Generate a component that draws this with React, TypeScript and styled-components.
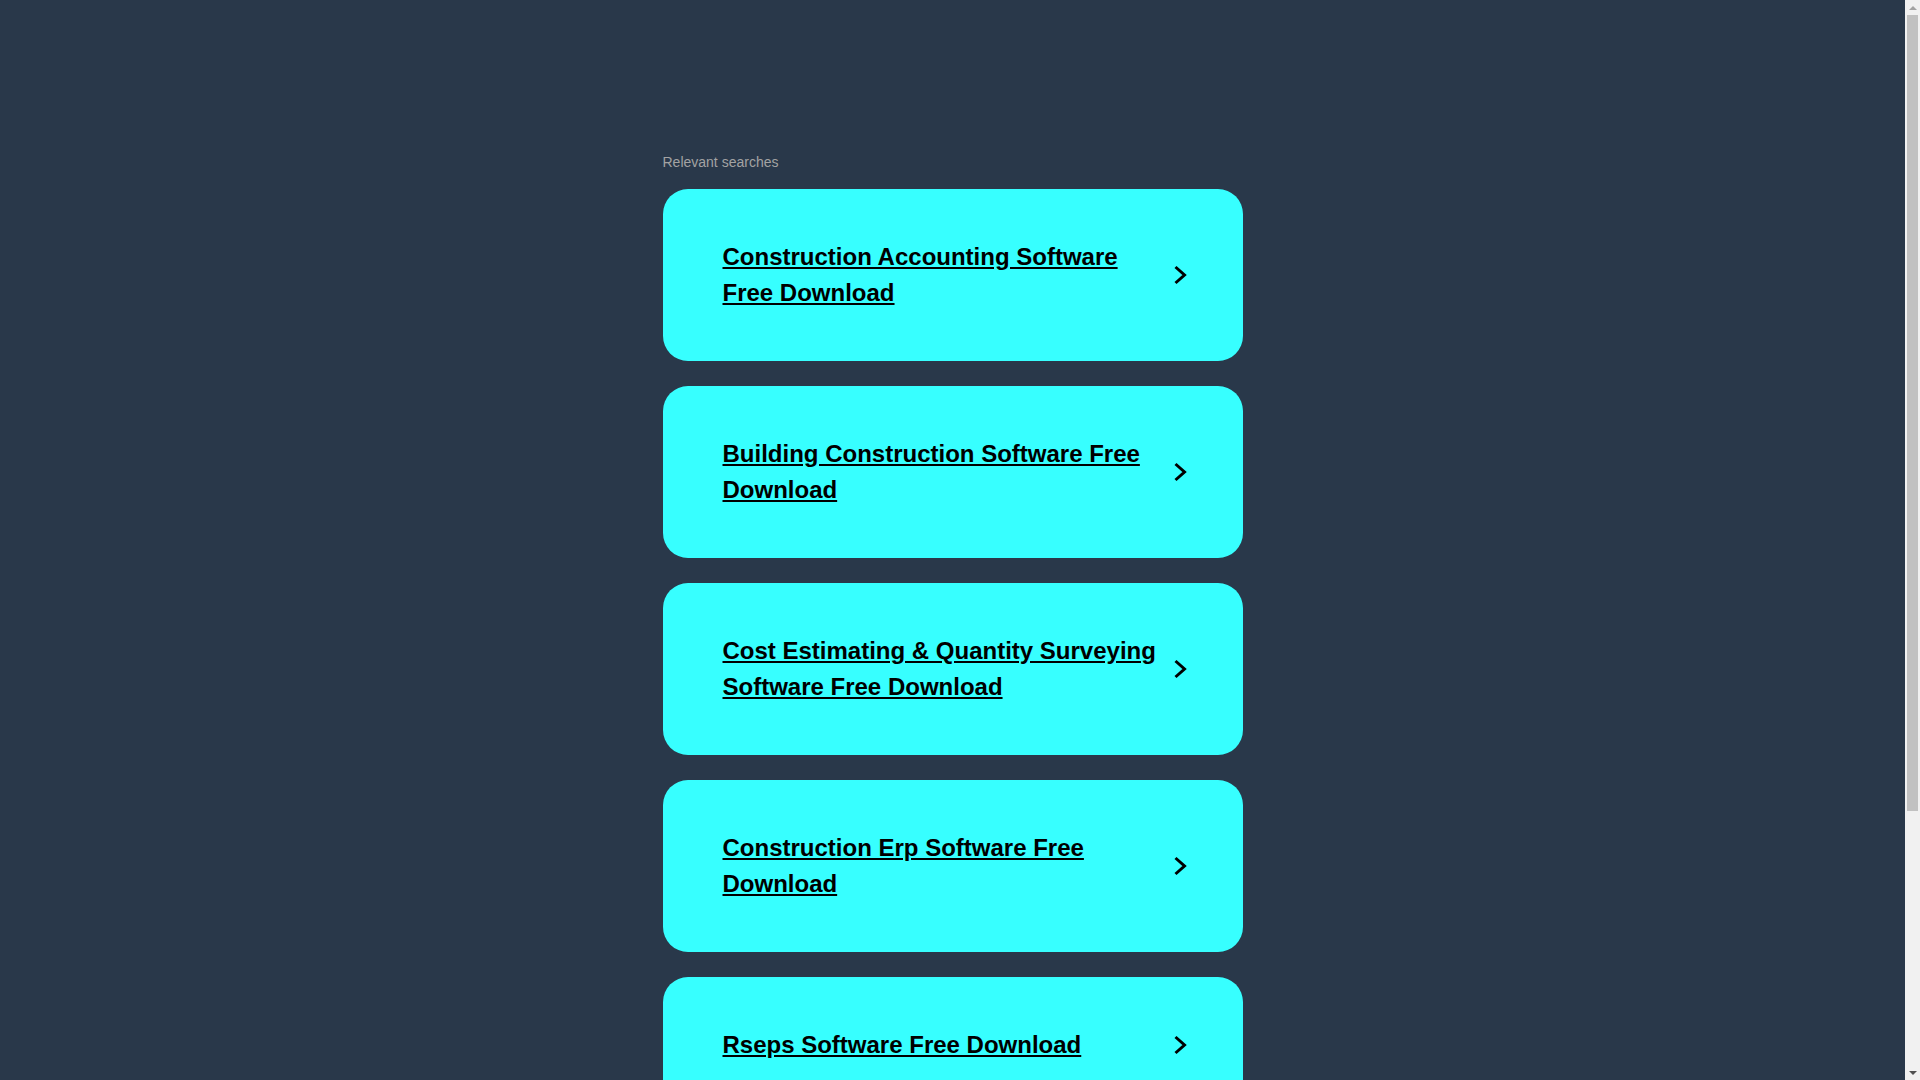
import styled, { createGlobalStyle } from 'styled-components'

const Global = createGlobalStyle`
  html, body {
    margin: 0;
    padding: 0;
    background: #29384a;
  }
  body {
    font-family: "Liberation Sans", Arial, sans-serif;
    padding-right: 15px;
  }
`

const Page = styled.main`
  width: 580px;
  margin: 0 auto;
  padding: 154px 0 317px;
`

const Label = styled.div`
  font-size: 14px;
  line-height: 16px;
  color: #a3a3a3;
  margin-bottom: 19px;
`

const List = styled.ul`
  list-style: none;
  margin: 0;
  padding: 0;
  display: flex;
  flex-direction: column;
  gap: 25px;
`

const Card = styled.li`
  background: #37ffff;
  border-radius: 25px;
  padding: 50px 53px 50px 60px;
  display: flex;
  align-items: center;
  gap: 7px;
  cursor: pointer;
`

const Title = styled.a`
  flex: 1;
  font-size: 24px;
  line-height: 36px;
  font-weight: bold;
  color: #000;
  text-decoration: underline;
`

/* imitation of the browser scrollbar seen in the screenshot */
const Scrollbar = styled.div`
  position: fixed;
  top: 0;
  right: 0;
  width: 15px;
  height: 100vh;
  background: #f1f1f1;
  display: flex;
  flex-direction: column;
  align-items: center;
`

const Arrow = styled.div<{ $down?: boolean }>`
  height: 15px;
  width: 15px;
  display: flex;
  align-items: center;
  justify-content: center;
  &::before {
    content: '';
    border-left: 4px solid transparent;
    border-right: 4px solid transparent;
    ${(p) => (p.$down ? 'border-top: 4px solid #505050;' : 'border-bottom: 4px solid #a3a3a3;')}
  }
`

const Thumb = styled.div`
  width: 11px;
  height: 796px;
  background: #c1c1c1;
`

const Spacer = styled.div`
  flex: 1;
`

const Chevron = () => (
  <svg width="20" height="24" viewBox="0 0 20 24" style={{ flexShrink: 0 }}>
    <polyline
      points="5.5,4 14.5,12 5.5,20"
      fill="none"
      stroke="#000"
      strokeWidth="3"
      strokeLinejoin="miter"
    />
  </svg>
)

const searches = [
  'Construction Accounting Software Free Download',
  'Building Construction Software Free Download',
  'Cost Estimating & Quantity Surveying Software Free Download',
  'Construction Erp Software Free Download',
  'Rseps Software Free Download',
]

export default function App() {
  return (
    <>
      <Global />
      <Page>
        <Label>Relevant searches</Label>
        <List>
          {searches.map((s) => (
            <Card key={s}>
              <Title>{s}</Title>
              <Chevron />
            </Card>
          ))}
        </List>
      </Page>
      <Scrollbar>
        <Arrow />
        <Thumb />
        <Spacer />
        <Arrow $down />
      </Scrollbar>
    </>
  )
}
